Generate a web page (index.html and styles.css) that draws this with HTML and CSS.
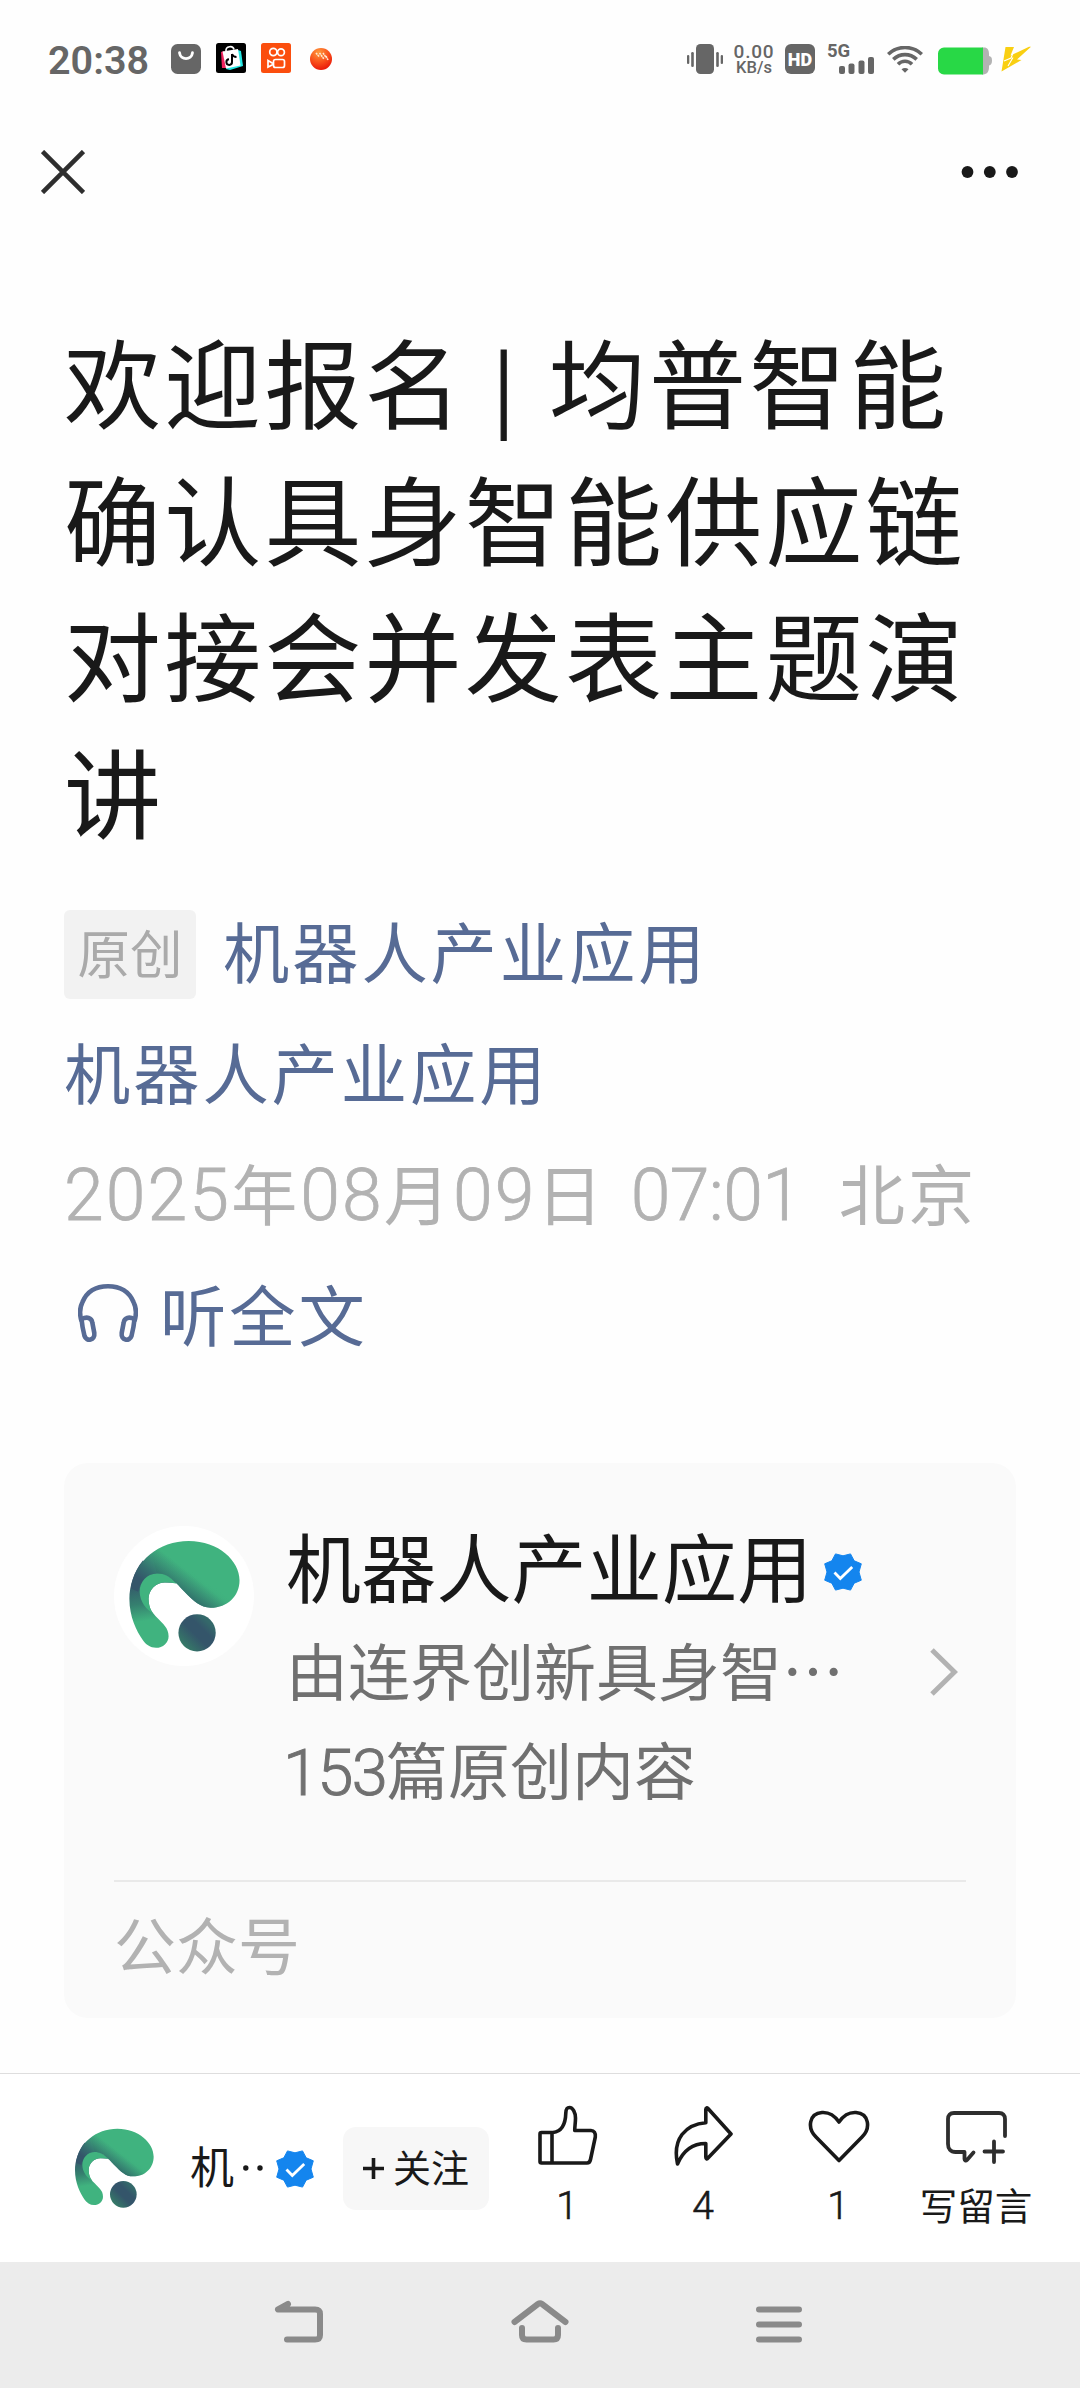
FILE: index.html
```html
<!DOCTYPE html>
<html lang="zh-CN">
<head>
<meta charset="utf-8">
<title>欢迎报名 | 均普智能确认具身智能供应链对接会并发表主题演讲</title>
<link rel="stylesheet" href="styles.css">
</head>
<body>
<svg class="defs" width="0" height="0" aria-hidden="true">
  <defs>
    <linearGradient id="gHead" gradientUnits="userSpaceOnUse" x1="50" y1="110" x2="98" y2="50">
      <stop offset="0" stop-color="#34556a"/><stop offset=".35" stop-color="#34706f"/><stop offset="1" stop-color="#40b37f"/>
    </linearGradient>
    <linearGradient id="gTail" gradientUnits="userSpaceOnUse" x1="50" y1="120" x2="66" y2="225">
      <stop offset="0" stop-color="#34556a"/><stop offset=".45" stop-color="#35806f"/><stop offset=".8" stop-color="#40b37f"/>
    </linearGradient>
    <linearGradient id="gShade" gradientUnits="userSpaceOnUse" x1="136" y1="142" x2="168" y2="96">
      <stop offset="0" stop-color="#2f6a68" stop-opacity=".95"/><stop offset="1" stop-color="#40b37f" stop-opacity="0"/>
    </linearGradient>
    <linearGradient id="gDot" x1=".1" y1=".9" x2=".8" y2=".2">
      <stop offset="0" stop-color="#368067"/><stop offset=".5" stop-color="#34556a"/><stop offset=".75" stop-color="#34556a"/><stop offset="1" stop-color="#34696a"/>
    </linearGradient>
    <radialGradient id="gBall" cx=".4" cy=".2" r=".9">
      <stop offset="0" stop-color="#ff9a3c"/><stop offset=".5" stop-color="#f9501b"/><stop offset="1" stop-color="#e50b05"/>
    </radialGradient>
    <symbol id="logo" viewBox="0 0 300 300">
      <circle cx="150" cy="150" r="150" fill="#fff"/>
      <path fill="url(#gTail)" d="M33 156C33 130 42 98 62 74L140 122L109 121C90 121 74 137 74 156C74 178 84 188 92 196C105 210 117 218 117 236C117 250 105 261 90 261C78 261 68 254 62 245C48 225 33 195 33 156Z"/>
      <path fill="url(#gHead)" d="M160 32C225 32 269 75 269 116C269 150 243 175 207 175C185 175 172 162 150 140C133 123 119 102 92 102C70 102 55 120 52 141L36 134C44 75 96 32 160 32Z"/>
      <path fill="url(#gShade)" d="M160 32C225 32 269 75 269 116C269 150 243 175 207 175C185 175 172 162 150 140C133 123 119 102 92 102L80 60Z"/>
      <path fill="#40b37f" d="M134 124C120 108 108 102 92 102C70 102 55 120 55 141C55 162 70 180 84 188C78 180 74 170 74 156C74 137 90 121 109 121C120 121 128 122 134 124Z"/>
      <circle cx="178" cy="229" r="40" fill="url(#gDot)"/>
    </symbol>
    <symbol id="verified" viewBox="0 0 38 38">
      <path fill="#1485ee" d="M11.500.9L19 2.800L26.500.9L30.200 7.800L37.300 10.800L35 19L37.300 27.200L30.200 30.200L26.500 37.100L19 35.200L11.500 37.100L7.800 30.200L.7 27.200L3 19L.7 10.800L7.800 7.800Z" stroke="#1485ee" stroke-width="1" stroke-linejoin="round"/>
      <path d="M10.500 19.500L16.300 25.500L28.200 14" fill="none" stroke="#fff" stroke-width="2.800"/>
    </symbol>
  </defs>
</svg>

<div class="screen">
  <header class="status">
    <span class="clock">20:38</span>
    <svg class="st-bag" width="30" height="30" viewBox="0 0 30 30"><rect width="30" height="30" rx="6.500" fill="#666"/><path d="M8.500 8.700C9.500 16.500 20.500 16.500 21.500 8.700" fill="none" stroke="#fff" stroke-width="2.800" stroke-linecap="round"/></svg>
    <svg class="st-app" width="30" height="30" viewBox="0 0 30 30"><rect width="30" height="30" rx="2.500" fill="#000"/><path d="M5 9L8 8L11 25L6 25Z" fill="#f0245e"/><path d="M22 7L25 8L27 23L14 27L10 26Z" fill="#25e8e4"/><path d="M6.500 8.500L22 6L24.500 22.500L10 25.500Z" fill="#fff"/><path d="M10 8C9.500 3 17 2 18 6.500" fill="none" stroke="#fff" stroke-width="1.600"/><path d="M16 11V19A2.800 2.800 0 1 1 13 16.300M16 11C17 13.500 18.500 14 20.500 14" fill="none" stroke="#000" stroke-width="2"/></svg>
    <svg class="st-app" width="30" height="30" viewBox="0 0 30 30"><rect width="30" height="30" rx="2.500" fill="#fb4e0e"/><g fill="none" stroke="#fff" stroke-width="1.700"><circle cx="12.300" cy="9" r="3.600"/><circle cx="20" cy="9.300" r="3.400"/><rect x="12.500" y="16.500" width="11" height="8" rx="2"/><path d="M12 20.500L7 17.500V24L12 21.500"/></g></svg>
    <svg class="st-ball" width="22" height="22" viewBox="0 0 22 22"><circle cx="11" cy="11" r="11" fill="url(#gBall)"/><path d="M6 5L9.500 9M9.500 5L14 11M13 5L16.500 10M16 8L18 12" stroke="#ffe9d2" stroke-width="1.600" stroke-dasharray="2 .6"/></svg>

    <div class="status-right">
      <svg width="36" height="30" viewBox="0 0 36 30" fill="#666"><rect x="9" width="18" height="30" rx="4.500"/><rect x="4.200" y="8" width="2.600" height="15" rx="1.300"/><rect y="11" width="2.300" height="9" rx="1.100"/><rect x="29.200" y="8" width="2.600" height="15" rx="1.300"/><rect x="33.700" y="11" width="2.300" height="9" rx="1.100"/></svg>
      <div class="speed"><span class="speed-n">0.00</span><span class="speed-u">KB/s</span></div>
      <div class="hd">HD</div>
      <div class="cell"><span class="cell-g">5G</span><svg class="cell-bars" width="36" height="17" viewBox="0 0 36 17" fill="#666"><rect y="9" width="6" height="8" rx="2"/><rect x="9.500" y="6.500" width="6" height="10.500" rx="2"/><rect x="19.500" y="3.500" width="6" height="13.500" rx="2"/><rect x="29" width="6" height="17" rx="2"/></svg></div>
      <svg class="wifi" width="36" height="28" viewBox="0 0 36 28" fill="none" stroke="#666" stroke-width="3.600"><path d="M1.200 8.300C11 -.8 25 -.8 34.800 8.300"/><path d="M6.300 13.400C13 7 23 7 29.700 13.400"/><path d="M11 18.200C15 14.200 21 14.200 25 18.200"/><path d="M14.500 23.200C16.500 21.500 19.500 21.500 21.500 23.200L18 26.800Z" fill="#666" stroke="none"/></svg>
      <svg class="battery" width="54" height="28" viewBox="0 0 54 28"><path d="M44 .5H46C49.500 .5 51 3 51 7V9C53 9.500 54 10.500 54 13.500S53 18 51 18.500V20C51 25 49 27.500 44 27.500Z" fill="#b3b3b3"/><path d="M6 .5H45V27.500H6A6 6 0 0 1 0 21.500V6.500A6 6 0 0 1 6 .5Z" fill="#28d846"/></svg>
      <svg class="bolt" width="30" height="26" viewBox="0 0 30 26" fill="#f9cf12"><path d="M4.500 1H13L9.500 9.500L28 .8H30L16 13.500L20.500 14L.5 25.500Z"/><path d="M14.500 1L10 12L3 15M7 20L12 11.500" stroke="#fff" stroke-width="1.100" fill="none"/></svg>
    </div>
  </header>

  <nav class="topbar">
    <svg width="44" height="44" viewBox="0 0 44 44" fill="none" stroke="#2e2e2e" stroke-width="4.600"><path d="M1.500 1.500L42.500 42.500M42.500 1.500L1.500 42.500"/></svg>
    <svg width="58" height="12" viewBox="0 0 58 12" fill="#191919"><circle cx="6.500" cy="6" r="5.900"/><circle cx="28.800" cy="6" r="5.900"/><circle cx="51" cy="6" r="5.900"/></svg>
  </nav>

  <main class="article">
    <h1 class="title">欢迎报名 <span class="bar">|</span> 均普智能<br>确认具身智能供应链<br>对接会并发表主题演<br>讲</h1>
    <div class="meta">
      <div class="meta-row"><span class="tag">原创</span><span class="author">机器人产业应用</span></div>
      <div class="meta-row link">机器人产业应用</div>
      <div class="meta-row date"><span class="day"><b class="num">2025</b>年<b class="num">08</b>月<b class="num">09</b>日</span><span class="time"><b class="num">07:01</b></span><span>北京</span></div>
      <div class="meta-row link listen">
        <svg width="60" height="60" viewBox="0 0 60 60" fill="none" stroke="#576b95" stroke-width="4.600" stroke-linejoin="round"><path d="M3.500 38C1 30 2.500 23 4.500 19C9 8.500 18 3.300 30 3.300S51 8.500 55.500 19C57.500 23 59 30 56.500 38"/><path d="M3.500 36C9 33.500 13.500 34.500 14.300 39.500L16.300 50C17.300 57.500 8.500 59 6.500 53C5 47 4 42 3.500 36Z"/><path d="M56.500 36C51 33.500 46.500 34.500 45.700 39.500L43.700 50C42.700 57.500 51.500 59 53.500 53C55 47 56 42 56.500 36Z"/></svg>
        <span>听全文</span>
      </div>
    </div>

    <section class="card">
      <div class="card-main">
        <svg class="card-logo" width="140" height="140"><use href="#logo"/></svg>
        <div class="card-info">
          <div class="card-name"><span>机器人产业应用</span><svg width="38" height="38"><use href="#verified"/></svg></div>
          <div class="card-desc">由连界创新具身智…</div>
          <div class="card-desc card-count"><b class="num">153</b>篇原创内容</div>
        </div>
        <svg class="chevron" width="28" height="48" viewBox="0 0 28 48" fill="none" stroke="#b2b2b2" stroke-width="5"><path d="M2 2L24.500 24L2 46"/></svg>
      </div>
      <div class="card-foot">公众号</div>
    </section>
  </main>

  <footer class="actions">
    <svg class="mini-logo" width="100" height="100"><use href="#logo"/></svg>
    <div class="mini-name"><span>机</span><svg width="20" height="6" viewBox="0 0 20 6" fill="#191919"><circle cx="2.800" cy="3" r="2.700"/><circle cx="17" cy="3" r="2.700"/></svg></div>
    <svg class="mini-verified" width="38" height="38"><use href="#verified"/></svg>
    <div class="follow"><svg width="21" height="21" viewBox="0 0 21 21" stroke="#191919" stroke-width="3.600"><path d="M10.500 0V21M0 10.500H21"/></svg><span>关注</span></div>
    <div class="act act-like">
      <svg width="60" height="62" viewBox="0 0 60 62" fill="none" stroke="#191919" stroke-width="3.600" stroke-linejoin="round"><path d="M3.500 27.500H15C24 26.500 27.500 19 27.800 8C28 3 29.500 2.500 31.500 2.500C35 2.500 37.500 8 37.500 13C37.500 19 36.500 22.500 36.800 25.500H53C56 25.500 57.800 28 57.300 32L52.500 54.500C52 57 51 58 49 58H3.500C2.500 58 2 57.500 2 56.500V29C2 28 2.500 27.500 3.500 27.500ZM14 27.500V58"/></svg>
      <span>1</span>
    </div>
    <div class="act act-share">
      <svg width="60" height="62" viewBox="0 0 60 62" fill="none" stroke="#191919" stroke-width="3.600" stroke-linejoin="round"><path d="M31.800 4.500C31.800 2.500 33 2.500 34 3.500L57 29L34 53C33 54.500 31.800 54 31.800 52V38.500C19 38.500 9 46 3.500 59C1 47 2 37.500 8 29.500C14 22 22 18.500 31.800 17.800Z"/></svg>
      <span>4</span>
    </div>
    <div class="act act-heart">
      <svg width="62" height="62" viewBox="0 0 62 62" fill="none" stroke="#191919" stroke-width="3.600" stroke-linejoin="round"><path d="M31 55.500L8 32C-1 23 1 8.500 14 7.500C22 7 26.500 10.500 31 17C35.500 10.500 40 7 48 7.500C61 8.500 63 23 54 32Z"/></svg>
      <span>1</span>
    </div>
    <div class="act act-comment">
      <svg width="62" height="62" viewBox="0 0 62 62" fill="none" stroke="#2e2e2e" stroke-width="3.800" stroke-linecap="round" stroke-linejoin="round"><path d="M59 31V14C59 10 57 8 53 8H8C4 8 2 10 2 14V39C2 43.500 4.500 47 9.500 47H18.500V54C18.500 56 20 56 21 55L27.500 47.500M38.500 46.500H57M48 36.500V57"/></svg>
      <span>写留言</span>
    </div>
  </footer>

  <nav class="sysnav">
    <svg width="50" height="44" viewBox="0 0 50 44" fill="none" stroke="#8a8a8a" stroke-width="6" stroke-linecap="round" stroke-linejoin="round"><path d="M14 4L4 9.500H41C44.500 9.500 46 11 46 14V35C46 38 44.500 39.500 41 39.500H13"/></svg>
    <svg width="60" height="44" viewBox="0 0 60 44" fill="none" stroke="#8a8a8a" stroke-width="6" stroke-linecap="round" stroke-linejoin="round"><path d="M4.500 22L28 4Q30 2.500 32 4L55.500 22M12 28V35C12 38 13.500 39.500 16.500 39.500H43.500C46.500 39.500 48 38 48 35V28"/></svg>
    <svg width="46" height="44" viewBox="0 0 46 44" stroke="#8a8a8a" stroke-width="6" stroke-linecap="round"><path d="M3 9.500H43M3 24.500H43M3 39.500H43"/></svg>
  </nav>
</div>
</body>
</html>
```

FILE: styles.css
```css
* { box-sizing: border-box; }
body {
  margin: 0;
  background: #fff;
  font-family: "Noto Sans CJK SC", sans-serif;
  color: #191919;
}
.defs { position: absolute; }
svg { display: block; flex: none; }
.screen {
  width: 1080px;
  height: 2388px;
  display: flex;
  flex-direction: column;
  background: #fefefe;
  overflow: hidden;
}

/* Status bar */
.status {
  height: 118px;
  flex: none;
  display: flex;
  align-items: center;
  padding: 0 49px 0 48px;
  color: #666;
  font-family: Roboto, sans-serif;
}
.clock { width: 123px; font-size: 39.500px; font-weight: 600; line-height: 44px; padding-top: 3px; white-space: nowrap; }
.st-app { margin: -2px 0 0 15px; }
.st-ball { margin-left: 19px; }
.status-right { margin-left: auto; display: flex; align-items: center; }
.speed { width: 44px; margin: 0 9px; display: flex; flex-direction: column; align-items: center; font-weight: 500; }
.speed-n { font-size: 19px; line-height: 17px; letter-spacing: .8px; }
.speed-u { font-size: 16.500px; line-height: 16px; }
.hd { width: 30px; height: 30px; border-radius: 6px; background: #666; color: #fff; font-size: 18px; font-weight: 900; line-height: 31px; text-align: center; }
.cell { width: 48px; height: 30px; margin-left: 12px; display: flex; flex-direction: column; justify-content: space-between; }
.cell-g { font-size: 18.500px; font-weight: 700; line-height: 15px; height: 13px; }
.cell-bars { align-self: flex-end; }
.wifi { margin-left: 12px; margin-top: 2px; }
.battery { margin-left: 15px; margin-top: 3px; }
.bolt { margin-left: 9px; margin-top: -1px; }

/* Page bar */
.topbar { height: 108px; flex: none; display: flex; align-items: center; justify-content: space-between; padding: 0 61px 0 41px; }

/* Article head */
.article { flex: 1; padding: 85px 64px 0; }
.title { margin: 0; font-size: 97px; font-weight: 400; line-height: 136.600px; letter-spacing: 3.200px; white-space: nowrap; }
.bar { margin: 0 6px 0 3px; font-size: 81px; line-height: 1; vertical-align: 3px; -webkit-text-stroke: 1px currentColor; }
.meta { margin-top: 32px; font-size: 66.300px; letter-spacing: 2.900px; }
.meta-row { height: 121px; display: flex; align-items: center; line-height: 121px; white-space: nowrap; }
.author, .link { color: #576b95; }
.author { margin-top: -1px; }
.tag { width: 132px; height: 89px; margin: 10px 27px 0 0; border-radius: 6px; background: #f2f2f2; color: #aaa; font-size: 52.500px; line-height: 82px; letter-spacing: 0; text-align: center; }
.date { color: #b2b2b2; }
.num { font-family: Roboto, sans-serif; font-weight: 300; font-size: 71.500px; letter-spacing: 2.100px; line-height: 1px; -webkit-text-stroke: .8px currentColor; }
.time { flex: none; margin-left: 25px; width: 208px; }
.time .num { letter-spacing: -.6px; }
.listen { padding-left: 14px; gap: 22px; }

/* Account card */
.card { margin-top: 90px; height: 555px; padding: 0 50px; border-radius: 24px; background: #fafafa; }
.card-main { height: 419px; display: flex; align-items: flex-start; border-bottom: 2px solid #e9e9e9; }
.card-logo { margin-top: 63px; }
.card-info { flex: 1; margin-left: 32px; padding-top: 56px; white-space: nowrap; }
.card-name { display: flex; align-items: center; gap: 12px; font-size: 75px; letter-spacing: .2px; line-height: 92px; }
.card-name svg { margin-top: 13px; }
.card-desc { margin-top: 8px; font-size: 62px; line-height: 100px; color: #707070; }
.card-count { margin-top: -1px; }
.card-count .num { margin-left: -3px; font-size: 65px; letter-spacing: -1.700px; -webkit-text-stroke-width: 1px; }
.chevron { margin: 185px 8px 0 0; }
.card-foot { font-size: 62px; line-height: 123px; color: #b2b2b2; }

/* Bottom actions */
.actions { height: 189px; flex: none; border-top: 1px solid #dedede; background: #fff; display: flex; align-items: flex-start; padding-left: 64px; }
.mini-logo { margin-top: 44px; }
.mini-name { width: 86px; margin: 62px 0 0 26px; height: 64px; display: flex; align-items: center; gap: 9px; font-size: 44px; line-height: 64px; }
.mini-name span { margin-top: -7px; }
.mini-verified { margin-top: 76px; }
.follow { width: 146px; height: 83px; margin: 53px 0 0 29px; border-radius: 13px; background: #f7f7f7; display: flex; align-items: center; justify-content: center; gap: 9px; font-size: 38px; }
.follow span { line-height: 80px; margin-top: -6px; }
.act { margin-top: 31px; display: flex; flex-direction: column; align-items: center; line-height: 44px; width: 136px; }
.act span { margin: 17px 2px 0 0; font-family: Roboto, sans-serif; font-weight: 300; font-size: 39px; -webkit-text-stroke: .6px currentColor; }
.act-comment span { margin-top: 15px; font-family: "Noto Sans CJK SC", sans-serif; font-weight: 400; font-size: 37.500px; white-space: nowrap; -webkit-text-stroke: 0; }
.act-like { margin-left: 11px; }
.act-heart { margin-left: -1px; }
.act-comment { margin-left: 2px; }

/* System navigation */
.sysnav { height: 126px; flex: none; background: #ececec; display: flex; align-items: flex-start; justify-content: space-between; padding: 38px 278px 0 274px; }
```
